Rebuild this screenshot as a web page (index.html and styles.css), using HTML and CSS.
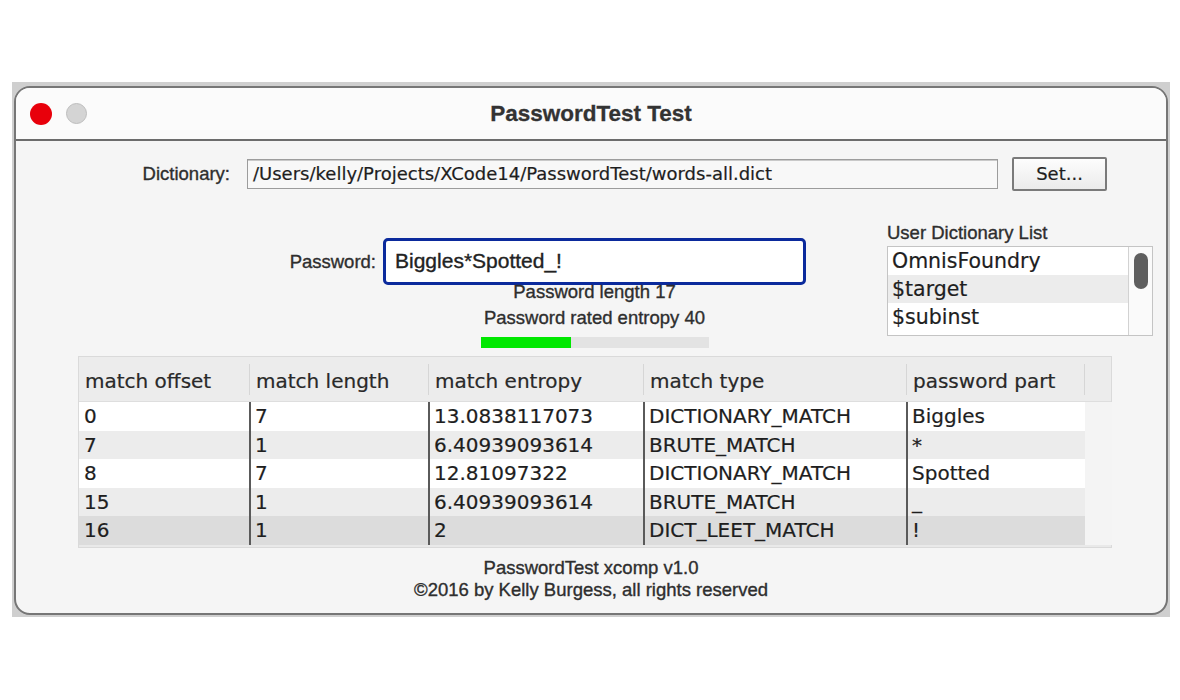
FILE: index.html
```html
<!DOCTYPE html>
<html>
<head>
<meta charset="utf-8">
<link rel="stylesheet" href="styles.css">
</head>
<body>
<div class="desk">
  <div class="window">
    <div class="titlebar">
      <div class="lights">
        <span class="light red"></span>
        <span class="light gray"></span>
      </div>
      <div class="title">PasswordTest Test</div>
      <div></div>
    </div>
    <div class="content">
      <div class="dict-row">
        <div class="label dict-label">Dictionary:</div>
        <div class="field">/Users/kelly/Projects/XCode14/PasswordTest/words-all.dict</div>
        <div class="button">Set...</div>
      </div>
      <div class="middle">
        <div class="pw-col">
          <div class="pw-row">
            <div class="label pw-label">Password:</div>
            <div class="pw-input">Biggles*Spotted_!</div>
          </div>
          <div class="stats">
            <div class="stat">Password length 17</div>
            <div class="stat">Password rated entropy 40</div>
            <div class="meter"><div class="meter-fill" style="width:39.5%"></div></div>
          </div>
        </div>
        <div class="list-col">
          <div class="label list-label">User Dictionary List</div>
          <div class="listbox">
            <div class="list-items">
              <div class="item">OmnisFoundry</div>
              <div class="item sel">$target</div>
              <div class="item">$subinst</div>
            </div>
            <div class="vscroll"><div class="thumb"></div></div>
          </div>
        </div>
      </div>
      <div class="table">
        <div class="thead">
          <div class="th">match offset</div>
          <div class="th">match length</div>
          <div class="th">match entropy</div>
          <div class="th">match type</div>
          <div class="th">password part</div>
          <div class="th last"></div>
        </div>
        <div class="tbody">
          <div class="tr r0"><div class="td">0</div><div class="td">7</div><div class="td">13.0838117073</div><div class="td">DICTIONARY_MATCH</div><div class="td">Biggles</div><div class="td gut"></div></div>
          <div class="tr r1"><div class="td">7</div><div class="td">1</div><div class="td">6.40939093614</div><div class="td">BRUTE_MATCH</div><div class="td">*</div><div class="td gut"></div></div>
          <div class="tr r0"><div class="td">8</div><div class="td">7</div><div class="td">12.81097322</div><div class="td">DICTIONARY_MATCH</div><div class="td">Spotted</div><div class="td gut"></div></div>
          <div class="tr r1"><div class="td">15</div><div class="td">1</div><div class="td">6.40939093614</div><div class="td">BRUTE_MATCH</div><div class="td">_</div><div class="td gut"></div></div>
          <div class="tr r2"><div class="td">16</div><div class="td">1</div><div class="td">2</div><div class="td">DICT_LEET_MATCH</div><div class="td">!</div><div class="td gut"></div></div>
        </div>
      </div>
      <div class="footer">
        <div>PasswordTest xcomp v1.0</div>
        <div>©2016 by Kelly Burgess, all rights reserved</div>
      </div>
    </div>
  </div>
</div>
</body>
</html>
```
FILE: styles.css
```css
html, body {
  margin: 0;
  padding: 0;
  background: #ffffff;
}
body {
  width: 1180px;
  height: 700px;
  overflow: hidden;
  font-family: "Liberation Sans", Arial, sans-serif;
  color: #333;
}
.desk {
  margin-top: 82px;
  margin-left: 12px;
  width: 1158px;
  height: 535px;
  background: #cfcfcf;
  padding-top: 4px;
  padding-left: 2px;
  box-sizing: border-box;
}
.window {
  width: 1154px;
  height: 529px;
  box-sizing: border-box;
  border: 2px solid #767676;
  border-radius: 16px;
  background: #f5f5f5;
  overflow: hidden;
}
.titlebar {
  height: 51px;
  border-bottom: 2px solid #6c6c6c;
  background: #fbfbfb;
  display: grid;
  grid-template-columns: 1fr auto 1fr;
  align-items: center;
}
.lights {
  display: flex;
  align-items: center;
  padding-left: 14px;
  gap: 14px;
}
.light {
  display: block;
  border-radius: 50%;
}
.light.red {
  width: 22px;
  height: 22px;
  background: #e8000b;
}
.light.gray {
  width: 19px;
  height: 19px;
  background: #d4d4d4;
  border: 1px solid #bdbdbd;
}
.title {
  font-weight: bold;
  font-size: 22.5px;
  color: #333;
  padding-top: 1px;
  -webkit-text-stroke: 0.3px #333;
}
.content {
  padding-top: 16px;
  padding-bottom: 12px;
}
.label {
  font-size: 18.5px;
  color: #2e2e2e;
  -webkit-text-stroke: 0.35px #2e2e2e;
}
.dict-row {
  display: flex;
  align-items: center;
  height: 34px;
}
.dict-label {
  width: 214px;
  text-align: right;
  margin-right: 17px;
}
.field {
  width: 751px;
  height: 30px;
  box-sizing: border-box;
  border: 1px solid #9c9c9c;
  box-shadow: inset 0 1px 0 #c9c9c9;
  background: #f8f8f8;
  font-family: "DejaVu Sans", sans-serif;
  font-size: 18px;
  color: #1e1e1e;
  -webkit-text-stroke: 0.2px #1e1e1e;
  padding-left: 5px;
  line-height: 28px;
  white-space: nowrap;
  margin-right: 14px;
}
.button {
  width: 95px;
  height: 34px;
  box-sizing: border-box;
  border: 2px solid #7a7a7a;
  border-radius: 2px;
  background: linear-gradient(#fdfdfd, #ebebeb);
  font-family: "DejaVu Sans", sans-serif;
  font-size: 18px;
  color: #1e1e1e;
  -webkit-text-stroke: 0.2px #1e1e1e;
  text-align: center;
  line-height: 30px;
}
.middle {
  display: flex;
  height: 157px;
}
.pw-col {
  width: 871px;
  padding-top: 47px;
  box-sizing: border-box;
}
.pw-row {
  display: flex;
  align-items: center;
}
.pw-label {
  width: 360px;
  text-align: right;
  margin-right: 7px;
}
.pw-input {
  width: 423px;
  height: 47px;
  box-sizing: border-box;
  border: 3px solid #0b2a9c;
  border-radius: 5px;
  background: #fff;
  font-size: 21px;
  color: #222;
  -webkit-text-stroke: 0.35px #222;
  padding-left: 9px;
  line-height: 40px;
}
.stats {
  margin-left: 367px;
  width: 423px;
  margin-top: -6px;
  display: flex;
  flex-direction: column;
  align-items: center;
}
.stat {
  font-size: 18.5px;
  line-height: 26px;
  color: #2e2e2e;
  -webkit-text-stroke: 0.35px #2e2e2e;
}
.meter {
  margin-top: 6px;
  width: 228px;
  height: 11px;
  background: #e3e3e3;
}
.meter-fill {
  height: 100%;
  background: #00e800;
}
.list-col {
  width: 266px;
  padding-top: 31px;
}
.list-label {
  line-height: 22px;
  margin-bottom: 2px;
}
.listbox {
  height: 90px;
  box-sizing: border-box;
  border: 1px solid #c4c4c4;
  background: #fff;
  display: flex;
}
.list-items {
  flex: 1;
}
.item {
  height: 28px;
  line-height: 28px;
  font-family: "DejaVu Sans", sans-serif;
  font-size: 20.5px;
  color: #1e1e1e;
  -webkit-text-stroke: 0.2px #1e1e1e;
  padding-left: 4px;
}
.item.sel {
  background: #ececec;
}
.vscroll {
  width: 24px;
  border-left: 1px solid #d2d2d2;
  background: #fafafa;
  padding-top: 6px;
  padding-left: 5px;
  box-sizing: border-box;
}
.thumb {
  width: 14px;
  height: 36px;
  border-radius: 7px;
  background: #5e5e5e;
}
.table {
  margin-top: 8px;
  margin-left: 62px;
  width: 1034px;
  height: 192px;
  box-sizing: border-box;
  border: 1px solid #dadada;
  background: #e9e9e9;
  font-family: "DejaVu Sans", sans-serif;
  font-size: 20px;
  color: #1e1e1e;
  -webkit-text-stroke: 0.2px #1e1e1e;
}
.thead, .tr {
  display: grid;
  grid-template-columns: 171px 179px 215px 263px 178px 1fr;
}
.thead {
  height: 44px;
  background: #ececec;
  border-bottom: 1px solid #dedede;
  align-items: center;
}
.th {
  padding-left: 6px;
  padding-top: 3px;
  line-height: 28px;
  color: #2a2a2a;
  border-right: 1px solid #d6d6d6;
}
.th.last {
  border-right: none;
}
.tr {
  height: 28.5px;
}
.td {
  padding-left: 5px;
  line-height: 28.5px;
  border-right: 2px solid #5a5a5a;
  white-space: nowrap;
  margin-right: -1px;
}
.td:nth-child(5), .td.gut {
  border-right: none;
}
.td:nth-child(5) {
  border-right: 1px solid #c8c8c8;
}
.r0 { background: #ffffff; }
.r1 { background: #ececec; }
.r2 { background: #dcdcdc; }
.td.gut { background: #f4f4f4; }
.footer {
  margin-top: 9px;
  text-align: center;
  font-size: 18.5px;
  line-height: 22px;
  color: #2e2e2e;
  -webkit-text-stroke: 0.35px #2e2e2e;
}
```
